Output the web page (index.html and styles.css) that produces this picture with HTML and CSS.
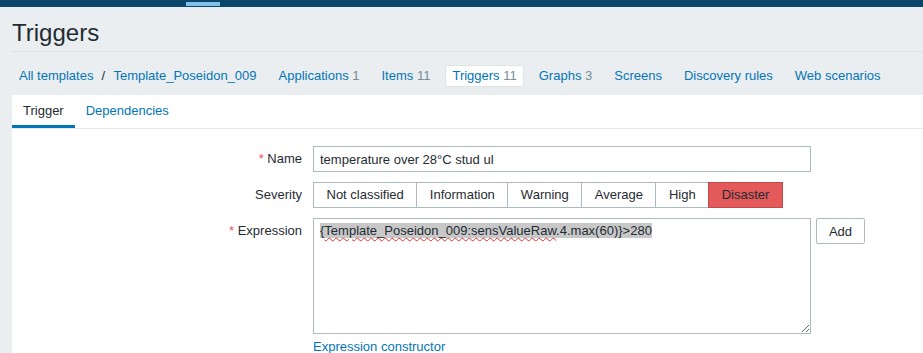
FILE: index.html
```html
<!DOCTYPE html>
<html lang="en">
<head>
    <meta charset="UTF-8">
    <meta name="viewport" content="width=device-width, initial-scale=1.0">
    <title>Triggers</title>
    <link rel="stylesheet" href="styles.css">
</head>
<body>
    <div class="topbar"><span class="topbar-mark"></span></div>

    <header class="page-header">
        <h1>Triggers</h1>
    </header>

    <ul class="object-nav">
        <li class="crumb"><a href="#">All templates</a></li>
        <li class="crumb-sep">/</li>
        <li class="crumb crumb-last"><a href="#">Template_Poseidon_009</a></li>
        <li><a href="#">Applications</a> <span class="count">1</span></li>
        <li><a href="#">Items</a> <span class="count">11</span></li>
        <li class="selected"><a href="#">Triggers</a> <span class="count">11</span></li>
        <li><a href="#">Graphs</a> <span class="count">3</span></li>
        <li><a href="#">Screens</a></li>
        <li><a href="#">Discovery rules</a></li>
        <li><a href="#">Web scenarios</a></li>
    </ul>

    <div class="panel">
        <ul class="tabs">
            <li class="active">Trigger</li>
            <li><a href="#">Dependencies</a></li>
        </ul>

        <form class="form-grid">
            <label class="form-label" for="name"><span class="required">*</span> Name</label>
            <div class="form-field">
                <input class="text-input" type="text" id="name" value="temperature over 28°C stud ul">
            </div>

            <label class="form-label">Severity</label>
            <div class="form-field">
                <ul class="severity">
                    <li>Not classified</li>
                    <li>Information</li>
                    <li>Warning</li>
                    <li>Average</li>
                    <li>High</li>
                    <li class="disaster">Disaster</li>
                </ul>
            </div>

            <label class="form-label label-top"><span class="required">*</span> Expression</label>
            <div class="form-field">
                <div class="expr-row">
                    <div class="textarea"><span class="selected-text">{<span class="misspelled">Template_Poseidon_009:sensValueRaw</span>.4.max(60)}&gt;280</span></div>
                    <button class="btn" type="button">Add</button>
                </div>
                <a class="link" href="#">Expression constructor</a>
            </div>
        </form>
    </div>
</body>
</html>
```

FILE: styles.css
```css
body {
    margin: 0;
    padding: 0;
    background-color: #ebeef0;
    font-family: "Liberation Sans", Arial, sans-serif;
    font-size: 13px;
    color: #1f2c33;
    overflow: hidden;
}
a {
    color: #0275b8;
    text-decoration: none;
}
ul {
    list-style: none;
    margin: 0;
    padding: 0;
}
.topbar {
    height: 7px;
    background-color: #0a466a;
    padding-left: 186px;
    padding-top: 2px;
    box-sizing: border-box;
}
.topbar-mark {
    display: block;
    width: 34px;
    height: 4px;
    background-color: #7fc1ea;
}
.page-header {
    margin-left: 12px;
    padding: 12px 0 4px;
    border-bottom: 1px solid #dde2e5;
}
.page-header h1 {
    margin: 0;
    font-size: 24px;
    font-weight: normal;
    line-height: 28px;
}
.object-nav {
    display: flex;
    padding: 13px 0 8px 12px;
}
.object-nav li {
    padding: 0 6px;
    margin-right: 8px;
    line-height: 20px;
    border: 1px solid transparent;
    border-radius: 2px;
    white-space: nowrap;
}
.object-nav li.crumb {
    margin-right: 0;
}
.object-nav li.crumb-last {
    margin-right: 8px;
}
.object-nav li.crumb-sep {
    width: 6px;
    padding: 0;
    margin: 0;
    text-align: center;
    border: none;
    line-height: 22px;
}
.object-nav li.selected {
    background-color: #fff;
    border-color: #dfe4e7;
}
.count {
    color: #768d99;
}
.panel {
    margin-left: 12px;
    background-color: #fff;
    padding-bottom: 20px;
}
.tabs {
    display: flex;
    border-bottom: 1px solid #e6e9eb;
}
.tabs li {
    padding: 2px 11px 0;
    line-height: 28px;
    border-bottom: 3px solid transparent;
}
.tabs li.active {
    border-bottom-color: #0275b8;
}
.form-grid {
    display: grid;
    grid-template-columns: 290px 1fr;
    column-gap: 11px;
    row-gap: 10px;
    padding-top: 17px;
}
.form-label {
    text-align: right;
    line-height: 26px;
}
.form-label.label-top {
    line-height: 15px;
    padding-top: 5px;
}
.required {
    color: #e45959;
}
.text-input {
    width: 498px;
    height: 26px;
    box-sizing: border-box;
    border: 1px solid #acbbc2;
    padding: 0 6px;
    font-family: inherit;
    font-size: 13px;
    color: #1f2c33;
    outline: none;
}
.severity {
    display: flex;
}
.severity li {
    height: 26px;
    line-height: 24px;
    box-sizing: border-box;
    padding: 0 12.5px;
    border: 1px solid #acbbc2;
    margin-left: -1px;
    background-color: #fff;
}
.severity li:first-child {
    margin-left: 0;
}
.severity li.disaster {
    background-color: #e45959;
    border-color: #bf4a4a;
}
.expr-row {
    display: flex;
    align-items: flex-start;
    gap: 5px;
}
.textarea {
    width: 498px;
    height: 116px;
    box-sizing: border-box;
    border: 1px solid #acbbc2;
    padding: 4px 6px;
    line-height: 15px;
    overflow: auto;
    resize: vertical;
}
.selected-text {
    background-color: #c8c8c8;
}
.misspelled {
    text-decoration: underline wavy #e0302c;
    text-decoration-thickness: 1px;
    text-underline-offset: 2px;
}
.btn {
    width: 49px;
    height: 26px;
    border: 1px solid #acbbc2;
    border-radius: 2px;
    background-color: #fff;
    color: #1f2c33;
    font-family: inherit;
    font-size: 13px;
    padding: 0;
}
.link {
    display: inline-block;
    margin-top: 5px;
    line-height: 15px;
}
```
